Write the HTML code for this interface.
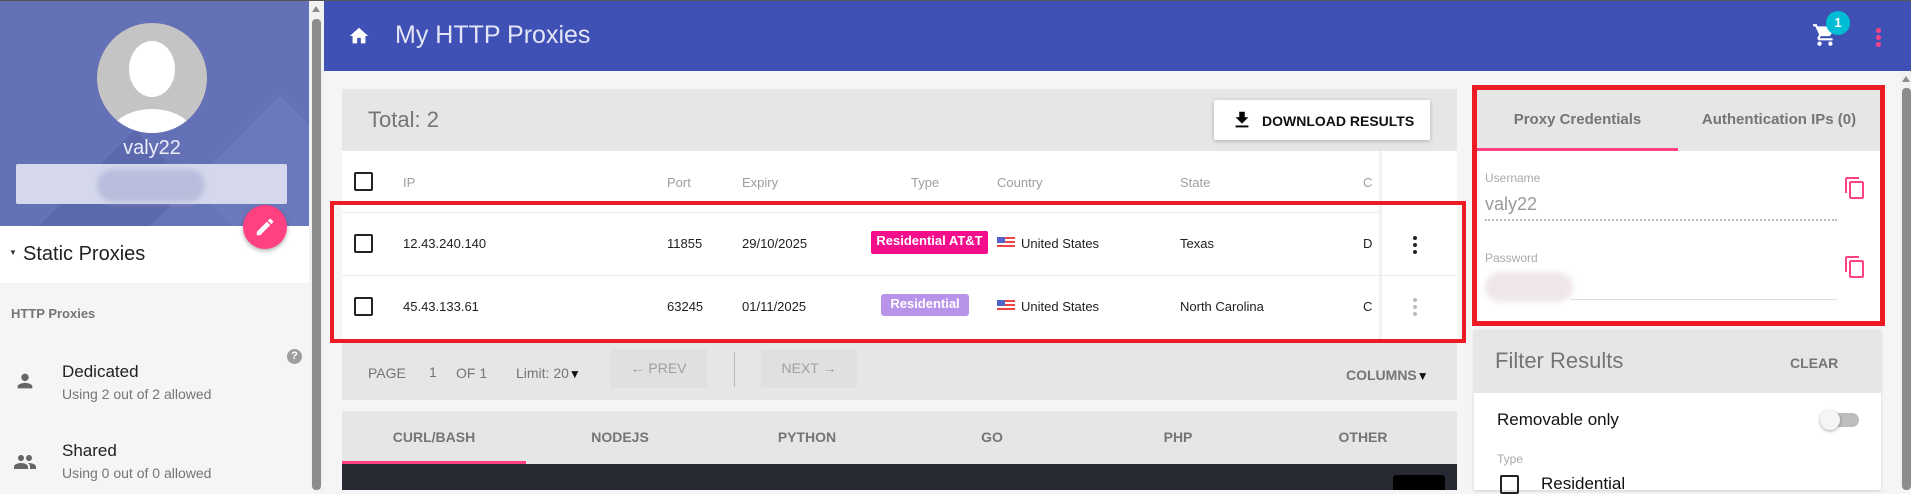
<!DOCTYPE html>
<html><head><meta charset="utf-8"><style>
*{box-sizing:border-box;margin:0;padding:0}
body{width:1911px;height:490px;overflow:hidden;background:#f5f5f5;font-family:"Liberation Sans",sans-serif;position:relative}
.a{position:absolute}
.g{color:#757575}
.th{position:absolute;top:175px;font-size:13px;color:#9e9e9e}
.td{position:absolute;font-size:13px;color:#212121}
.cb{position:absolute;width:19px;height:19px;border:2px solid #222;border-radius:2px}
.tab{position:absolute;top:429px;font-size:14px;font-weight:bold;color:#757575;transform:translateX(-50%)}
</style></head><body>
<div class="a" style="left:0;top:0;width:1911px;height:1px;background:#555"></div>
<!-- sidebar -->
<div class="a" style="left:0;top:1px;width:309px;height:225px;background:#6471b6;overflow:hidden">
 <div class="a" style="left:60px;top:160px;width:150px;height:150px;background:#5c68ae;transform:rotate(45deg)"></div>
 <div class="a" style="left:170px;top:140px;width:220px;height:220px;background:#7480c2;transform:rotate(45deg);opacity:.5"></div>
</div>
<svg class="a" style="left:97px;top:23px" width="110" height="110" viewBox="0 0 110 110"><defs><clipPath id="c"><circle cx="55" cy="55" r="55"/></clipPath></defs><circle cx="55" cy="55" r="55" fill="#c4c4c4"/><g clip-path="url(#c)" fill="#fff"><ellipse cx="55" cy="46" rx="23" ry="28"/><ellipse cx="55" cy="118" rx="45" ry="32"/></g></svg>
<div class="a" style="left:0;top:137px;width:304px;text-align:center;color:#eceefa;font-size:20px">valy22</div>
<div class="a" style="left:16px;top:164px;width:271px;height:40px;background:#d5d8ec;border-radius:2px"></div>
<div class="a" style="left:97px;top:169px;width:108px;height:33px;background:#b9bddc;border-radius:17px;filter:blur(3px)"></div>
<div class="a" style="left:0;top:226px;width:309px;height:57px;background:#fff"></div>
<div class="a" style="left:0;top:283px;width:309px;height:207px;background:#f5f5f5"></div>
<div class="a" style="left:243px;top:205px;width:44px;height:44px;border-radius:50%;background:#ff4081;box-shadow:0 2px 5px rgba(0,0,0,.3)"></div>
<svg class="a" style="left:254px;top:216px" width="22" height="22" viewBox="0 0 24 24"><path fill="#fff" d="M3 17.25V21h3.75L17.81 9.94l-3.75-3.75L3 17.25zM20.71 7.04a1 1 0 000-1.41l-2.34-2.34a1 1 0 00-1.41 0l-1.83 1.83 3.75 3.75 1.83-1.83z"/></svg>
<div class="a" style="left:9px;top:248px;font-size:8px;color:#333">▼</div>
<div class="a" style="left:23px;top:243px;font-size:20px;color:#212121">Static Proxies</div>
<div class="a g" style="left:11px;top:306px;font-size:13px;font-weight:bold">HTTP Proxies</div>
<div class="a" style="left:287px;top:349px;width:15px;height:15px;border-radius:50%;background:#9e9e9e;color:#fff;font-size:11px;font-weight:bold;text-align:center;line-height:15px">?</div>
<svg class="a" style="left:14px;top:370px" width="22" height="22" viewBox="0 0 24 24"><path fill="#666" d="M12 12c2.2 0 4-1.8 4-4s-1.8-4-4-4-4 1.8-4 4 1.8 4 4 4zm0 2c-2.7 0-8 1.3-8 4v2h16v-2c0-2.7-5.3-4-8-4z"/></svg>
<div class="a" style="left:62px;top:362px;font-size:17px;color:#212121">Dedicated</div>
<div class="a g" style="left:62px;top:386px;font-size:14px">Using 2 out of 2 allowed</div>
<svg class="a" style="left:13px;top:450px" width="24" height="24" viewBox="0 0 24 24"><path fill="#666" d="M16 11c1.66 0 3-1.340 3-3s-1.34-3-3-3-3 1.34-3 3 1.34 3 3 3zm-8 0c1.66 0 3-1.34 3-3S9.66 5 8 5 5 6.34 5 8s1.34 3 3 3zm0 2c-2.33 0-7 1.17-7 3.5V19h14v-2.5c0-2.33-4.67-3.5-7-3.5zm8 0c-.29 0-.62.02-.97.05 1.16.84 1.970 1.97 1.97 3.45V19h6v-2.5c0-2.33-4.67-3.5-7-3.5z"/></svg>
<div class="a" style="left:62px;top:441px;font-size:17px;color:#212121">Shared</div>
<div class="a g" style="left:62px;top:465px;font-size:14px">Using 0 out of 0 allowed</div>
<!-- left scrollbar -->
<div class="a" style="left:309px;top:1px;width:15px;height:489px;background:#f1f1f1"></div>
<div class="a" style="left:312px;top:19px;width:9px;height:471px;background:#8c8c8c;border-radius:4px"></div>
<div class="a" style="left:312px;top:6px;width:0;height:0;border-left:4.5px solid transparent;border-right:4.5px solid transparent;border-bottom:6px solid #8c8c8c"></div>
<!-- header -->
<div class="a" style="left:324px;top:1px;width:1587px;height:70px;background:#3f51b5"></div>
<svg class="a" style="left:348px;top:25px" width="22" height="22" viewBox="0 0 24 24"><path fill="#fff" d="M10 20v-6h4v6h5v-8h3L12 3 2 12h3v8z"/></svg>
<div class="a" style="left:395px;top:21px;font-size:25px;color:#e3e6f6">My HTTP Proxies</div>
<svg class="a" style="left:1812px;top:22px" width="26" height="26" viewBox="0 0 24 24"><path fill="#fff" d="M7 18c-1.1 0-2 .9-2 2s.9 2 2 2 2-.9 2-2-.9-2-2-2zM1 2v2h2l3.6 7.59-1.35 2.45c-.16.28-.25.61-.25.96 0 1.1.9 2 2 2h12v-2H7.42c-.14 0-.25-.11-.25-.25l.03-.12.9-1.63h7.45c.75 0 1.41-.41 1.75-1.03l3.58-6.49A1 1 0 0020 4H5.21l-.94-2H1zm16 16c-1.1 0-2 .9-2 2s.9 2 2 2 2-.9 2-2-.9-2-2-2z"/></svg>
<div class="a" style="left:1826px;top:11px;width:24px;height:24px;border-radius:50%;background:#00bcd4;color:#fff;font-size:13px;font-weight:bold;text-align:center;line-height:24px">1</div>
<div class="a" style="left:1876px;top:28px;width:5px;height:5px;border-radius:50%;background:#ff4081;box-shadow:0 7px 0 #ff4081,0 14px 0 #ff4081"></div>
<!-- main card -->
<div class="a" style="left:342px;top:89px;width:1115px;height:62px;background:#e6e6e6"></div>
<div class="a g" style="left:368px;top:107px;font-size:22px">Total: 2</div>
<div class="a" style="left:1214px;top:100px;width:216px;height:40px;background:#fff;box-shadow:0 1px 4px rgba(0,0,0,.25);border-radius:2px"></div>
<svg class="a" style="left:1231px;top:108px" width="22" height="24" viewBox="0 0 24 24"><path fill="#000" d="M19 9h-4V3H9v6H5l7 7 7-7zM5 18v2h14v-2H5z"/></svg>
<div class="a" style="left:1262px;top:113px;font-size:14px;font-weight:bold;color:#111">DOWNLOAD RESULTS</div>
<div class="a" style="left:342px;top:151px;width:1115px;height:191px;background:#fff"></div>
<div class="a" style="left:342px;top:212px;width:1040px;height:1px;background:#eee"></div>
<div class="a" style="left:342px;top:275px;width:1115px;height:1px;background:#eee"></div>
<div class="a" style="left:1380px;top:151px;width:2px;height:191px;background:#f0f0f0;box-shadow:-1px 0 2px rgba(0,0,0,.06)"></div>
<div class="cb" style="left:354px;top:172px"></div>
<div class="th" style="left:403px">IP</div><div class="th" style="left:667px">Port</div><div class="th" style="left:742px">Expiry</div><div class="th" style="left:911px">Type</div><div class="th" style="left:997px">Country</div><div class="th" style="left:1180px">State</div><div class="th" style="left:1363px">C</div>
<div class="cb" style="left:354px;top:234px"></div>
<div class="td" style="left:403px;top:236px">12.43.240.140</div><div class="td" style="left:667px;top:236px">11855</div><div class="td" style="left:742px;top:236px">29/10/2025</div>
<div class="a" style="left:871px;top:231px;width:117px;height:23px;background:#f50e8b;color:#fff;font-size:13px;font-weight:bold;text-align:center;line-height:20px;border-radius:2px">Residential AT&amp;T</div>
<div class="a" style="left:997px;top:237px;width:18px;height:12px;background:repeating-linear-gradient(#e44 0 2px,#fff 2px 4px)"></div><div class="a" style="left:997px;top:237px;width:8px;height:6px;background:#5163c8"></div>
<div class="td" style="left:1021px;top:236px">United States</div><div class="td" style="left:1180px;top:236px">Texas</div><div class="td" style="left:1363px;top:236px">D</div>
<div class="a" style="left:1413px;top:236px;width:4px;height:4px;border-radius:50%;background:#222;box-shadow:0 7px 0 #222,0 14px 0 #222"></div>
<div class="cb" style="left:354px;top:297px"></div>
<div class="td" style="left:403px;top:299px">45.43.133.61</div><div class="td" style="left:667px;top:299px">63245</div><div class="td" style="left:742px;top:299px">01/11/2025</div>
<div class="a" style="left:881px;top:294px;width:88px;height:22px;background:#b794ea;color:#fff;font-size:13px;font-weight:bold;text-align:center;line-height:20px;border-radius:3px">Residential</div>
<div class="a" style="left:997px;top:300px;width:18px;height:12px;background:repeating-linear-gradient(#e44 0 2px,#fff 2px 4px)"></div><div class="a" style="left:997px;top:300px;width:8px;height:6px;background:#5163c8"></div>
<div class="td" style="left:1021px;top:299px">United States</div><div class="td" style="left:1180px;top:299px">North Carolina</div><div class="td" style="left:1363px;top:299px">C</div>
<div class="a" style="left:1413px;top:298px;width:4px;height:4px;border-radius:50%;background:#bbb;box-shadow:0 7px 0 #bbb,0 14px 0 #bbb"></div>
<!-- red box -->
<div class="a" style="left:330px;top:201px;width:1136px;height:142px;border:4px solid #ed1c24"></div>
<!-- pagination -->
<div class="a" style="left:342px;top:343px;width:1115px;height:57px;background:#e6e6e6"></div>
<div class="a g" style="left:368px;top:365px;font-size:14px">PAGE</div>
<div class="a g" style="left:429px;top:364px;font-size:14px">1</div>
<div class="a g" style="left:456px;top:365px;font-size:14px">OF 1</div>
<div class="a g" style="left:516px;top:365px;font-size:14px">Limit: 20<span style="color:#111;font-size:12px">▼</span></div>
<div class="a" style="left:610px;top:349px;width:97px;height:39px;background:#e0e0e0;border-radius:2px;color:#a0a0a0;font-size:14px;text-align:center;line-height:39px">← PREV</div>
<div class="a" style="left:734px;top:352px;width:1px;height:35px;background:#bbb"></div>
<div class="a" style="left:761px;top:349px;width:96px;height:39px;background:#e0e0e0;border-radius:2px;color:#a0a0a0;font-size:14px;text-align:center;line-height:39px">NEXT →</div>
<div class="a g" style="left:1346px;top:367px;font-size:14px;font-weight:bold">COLUMNS<span style="color:#111;font-size:12px">▼</span></div>
<!-- code tabs -->
<div class="a" style="left:342px;top:411px;width:1115px;height:53px;background:#e6e6e6"></div>
<div class="a" style="left:342px;top:461px;width:184px;height:3px;background:#ff4081"></div>
<div class="tab" style="left:434px">CURL/BASH</div><div class="tab" style="left:620px">NODEJS</div><div class="tab" style="left:807px">PYTHON</div><div class="tab" style="left:992px">GO</div><div class="tab" style="left:1178px">PHP</div><div class="tab" style="left:1363px">OTHER</div>
<div class="a" style="left:342px;top:464px;width:1115px;height:26px;background:#282a33"></div>
<div class="a" style="left:1393px;top:475px;width:52px;height:15px;background:#000;border-radius:3px 3px 0 0"></div>
<!-- right panel -->
<div class="a" style="left:1477px;top:90px;width:403px;height:61px;background:#e6e6e6"></div>
<div class="a" style="left:1477px;top:148px;width:201px;height:3px;background:#ff4081"></div>
<div class="a g" style="left:1477px;top:111px;width:201px;text-align:center;font-size:15px;font-weight:bold">Proxy Credentials</div>
<div class="a g" style="left:1678px;top:111px;width:202px;text-align:center;font-size:15px;font-weight:bold">Authentication IPs (0)</div>
<div class="a" style="left:1477px;top:151px;width:403px;height:170px;background:#fff"></div>
<div class="a" style="left:1485px;top:171px;font-size:12px;color:#aaa">Username</div>
<div class="a" style="left:1485px;top:194px;font-size:18px;color:#9a9a9a">valy22</div>
<div class="a" style="left:1485px;top:219px;width:352px;border-top:2px dotted #bbb"></div>
<svg class="a" style="left:1843px;top:175px" width="24" height="26" viewBox="0 0 24 24"><path fill="#ff4081" d="M16 1H4c-1.1 0-2 .9-2 2v14h2V3h12V1zm3 4H8c-1.1 0-2 .9-2 2v14c0 1.1.9 2 2 2h11c1.1 0 2-.9 2-2V7c0-1.1-.9-2-2-2zm0 16H8V7h11v14z"/></svg>
<div class="a" style="left:1485px;top:251px;font-size:12px;color:#aaa">Password</div>
<div class="a" style="left:1485px;top:272px;width:88px;height:30px;background:#efe6e8;border-radius:15px;filter:blur(3px)"></div>
<div class="a" style="left:1570px;top:299px;width:267px;height:1px;background:#ddd"></div>
<svg class="a" style="left:1843px;top:254px" width="24" height="26" viewBox="0 0 24 24"><path fill="#ff4081" d="M16 1H4c-1.1 0-2 .9-2 2v14h2V3h12V1zm3 4H8c-1.1 0-2 .9-2 2v14c0 1.1.9 2 2 2h11c1.1 0 2-.9 2-2V7c0-1.1-.9-2-2-2zm0 16H8V7h11v14z"/></svg>
<div class="a" style="left:1472px;top:85px;width:413px;height:241px;border:5px solid #ed1c24"></div>
<!-- filter -->
<div class="a" style="left:1474px;top:330px;width:407px;height:160px;background:#fff;box-shadow:0 1px 3px rgba(0,0,0,.15)"></div>
<div class="a" style="left:1474px;top:330px;width:407px;height:63px;background:#e6e6e6"></div>
<div class="a g" style="left:1495px;top:348px;font-size:22px">Filter Results</div>
<div class="a g" style="left:1790px;top:355px;font-size:14px;font-weight:bold">CLEAR</div>
<div class="a" style="left:1497px;top:410px;font-size:17px;color:#111">Removable only</div>
<div class="a" style="left:1824px;top:413px;width:35px;height:14px;border-radius:7px;background:#bdbdbd"></div>
<div class="a" style="left:1820px;top:410px;width:20px;height:20px;border-radius:50%;background:#f5f5f5;box-shadow:0 1px 3px rgba(0,0,0,.35)"></div>
<div class="a" style="left:1497px;top:452px;font-size:12px;color:#aaa">Type</div>
<div class="cb" style="left:1500px;top:475px"></div>
<div class="a" style="left:1541px;top:474px;font-size:17px;color:#111">Residential</div>
<!-- right scrollbar -->
<div class="a" style="left:1900px;top:71px;width:11px;height:419px;background:#f1f1f1"></div>
<div class="a" style="left:1902px;top:88px;width:9px;height:402px;background:#8c8c8c;border-radius:4px"></div>
<div class="a" style="left:1902px;top:76px;width:0;height:0;border-left:4.5px solid transparent;border-right:4.5px solid transparent;border-bottom:6px solid #8c8c8c"></div>
</body></html>
